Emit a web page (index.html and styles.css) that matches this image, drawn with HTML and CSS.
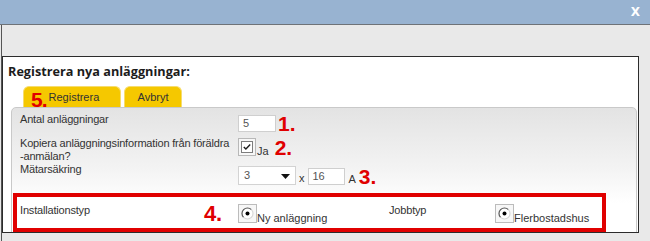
FILE: index.html
```html
<!DOCTYPE html>
<html lang="sv">
<head>
<meta charset="utf-8">
<link rel="stylesheet" href="styles.css">
</head>
<body>
<div class="titlebar"><span class="close">X</span></div>
<div class="dialog">
  <div class="panel">
    <h1 class="heading">Registrera nya anläggningar:</h1>
    <div class="tabs">
      <div class="tab tab-first"><span class="num num-tab">5.</span><span class="tab-text">Registrera</span></div>
      <div class="tab tab-second"><span class="tab-text">Avbryt</span></div>
    </div>
    <div class="formbox">
      <div class="row row-1">
        <div class="label">Antal anläggningar</div>
        <div class="ctrl ctrl-1">
          <span class="field field-small">5</span>
          <span class="num num-1">1.</span>
        </div>
      </div>
      <div class="row row-2">
        <div class="label">Kopiera anläggningsinformation från föräldra<br>-anmälan?</div>
        <div class="ctrl ctrl-2">
          <svg class="check" width="18" height="18" viewBox="0 0 18 18"><rect x="0.5" y="0.5" width="17" height="17" fill="#f7f7f7" stroke="#b8b8b8"/><rect x="3.5" y="3.5" width="11" height="11" fill="#fff" stroke="#7d7d7d"/><path d="M5.8 8.9 L7.9 11 L12.2 6.6" fill="none" stroke="#1e1e1e" stroke-width="1.4"/></svg>
          <span class="opt opt-ja">Ja</span>
          <span class="num num-2">2.</span>
        </div>
      </div>
      <div class="row row-3">
        <div class="label">Mätarsäkring</div>
        <div class="ctrl ctrl-3">
          <span class="select"><span class="select-val">3</span><svg class="caret" width="9" height="5" viewBox="0 0 9 5"><path d="M0 0 H9 L4.5 5 Z" fill="#111"/></svg></span>
          <span class="unit unit-x">x</span>
          <span class="field field-amp">16</span>
          <span class="unit unit-a">A</span>
          <span class="num num-3">3.</span>
        </div>
      </div>
      <div class="redbox">
        <div class="label label-red">Installationstyp<span class="num num-4">4.</span></div>
        <div class="radio-group">
          <svg class="radio" width="19" height="19" viewBox="0 0 19 19"><rect x="0.5" y="0.5" width="18" height="18" fill="#f7f7f7" stroke="#bcbcbc"/><circle cx="9.5" cy="9.5" r="5.5" fill="#fff"/><path d="M5.6 13.4 A5.5 5.5 0 0 1 13.4 5.6" fill="none" stroke="#555" stroke-width="1.2"/><path d="M13.4 5.6 A5.5 5.5 0 0 1 5.6 13.4" fill="none" stroke="#d8d8d8" stroke-width="1.2"/><circle cx="9.5" cy="9.5" r="2" fill="#000"/></svg>
          <span class="opt">Ny anläggning</span>
        </div>
        <div class="label label-job">Jobbtyp</div>
        <div class="radio-group">
          <svg class="radio" width="19" height="19" viewBox="0 0 19 19"><rect x="0.5" y="0.5" width="18" height="18" fill="#f7f7f7" stroke="#bcbcbc"/><circle cx="9.5" cy="9.5" r="5.5" fill="#fff"/><path d="M5.6 13.4 A5.5 5.5 0 0 1 13.4 5.6" fill="none" stroke="#555" stroke-width="1.2"/><path d="M13.4 5.6 A5.5 5.5 0 0 1 5.6 13.4" fill="none" stroke="#d8d8d8" stroke-width="1.2"/><circle cx="9.5" cy="9.5" r="2" fill="#000"/></svg>
          <span class="opt">Flerbostadshus</span>
        </div>
      </div>
    </div>
  </div>
</div>
</body>
</html>
```

FILE: styles.css
```css
* { box-sizing: border-box; }

body {
  margin: 0;
  width: 650px;
  height: 241px;
  overflow: hidden;
  background: #e9e9e9;
  font-family: "Liberation Sans", Arial, sans-serif;
  color: #333;
}

.titlebar {
  height: 25px;
  background: #98b3d1;
  border-bottom: 1px solid #6e7378;
  display: flex;
  justify-content: flex-end;
  align-items: center;
  padding-right: 10px;
}

.close {
  color: #fff;
  font: bold 12px "DejaVu Sans", sans-serif;
  line-height: 12px;
}

.dialog {
  margin-left: 1px;
  border-left: 1px solid #555;
  padding-top: 31px;
  height: 216px;
}

.panel {
  width: 637px;
  height: 177px;
  border: 1px solid #2c2c2c;
  background: #fff;
  overflow: hidden;
}

.heading {
  margin: 5px 0 0 0;
  padding-left: 5px;
  font: bold 12.7px/18px "Open Sans", sans-serif;
  color: #1c1c1c;
}

.tabs {
  display: flex;
  gap: 3px;
  margin: 6px 0 0 20px;
  height: 21px;
}

.tab {
  height: 21px;
  background: #f5c800;
  border: 1px solid #f6dc6e;
  border-bottom: none;
  border-radius: 6px 6px 0 0;
  display: flex;
  align-items: center;
  font-size: 11px;
  color: #333;
}

.tab-first {
  width: 98px;
  padding-left: 7px;
}

.tab-second {
  width: 58px;
  justify-content: center;
}

.num {
  color: #e00000;
  font-weight: bold;
  font-size: 21px;
  line-height: 17px;
}

.num-tab {
  font-size: 21px;
  letter-spacing: -1px;
  position: relative;
  top: 2px;
  margin-right: 2px;
}

.formbox {
  margin-left: 8px;
  width: 626px;
  height: 140px;
  border: 1px solid #c9c9c9;
  border-radius: 5px 5px 0 0;
  background: linear-gradient(#e3e3e3 0px, #f3f3f3 60px, #ffffff 95px);
}

.row {
  display: grid;
  grid-template-columns: 218px auto;
  padding-left: 8px;
}

.label {
  font-size: 11px;
  line-height: 13px;
  letter-spacing: -0.18px;
  color: #333;
}

.ctrl {
  display: flex;
  align-items: flex-end;
}

.row-1 { padding-top: 5px; }
.row-2 { margin-top: 5px; }
.row-3 { margin-top: 0; }

.ctrl-1 { margin-top: 2px; }
.ctrl-2 { margin-top: 1px; height: 18px; }
.ctrl-3 { margin-top: 3px; }

.field {
  display: inline-block;
  height: 17px;
  background: #fff;
  border: 1px solid #cfcfcf;
  font-size: 11px;
  line-height: 15px;
  padding-left: 4px;
  color: #555;
}

.field-small { width: 38px; }
.num-1 { margin-left: 2px; }

.check { display: block; }

.opt {
  font-size: 11px;
  line-height: 13px;
  color: #333;
  margin-bottom: -2px;
}

.opt-ja { margin-left: 1px; }
.num-2 { margin-left: 6px; }

.select {
  display: flex;
  align-items: center;
  justify-content: space-between;
  width: 58px;
  height: 19px;
  background: #fff;
  border: 1px solid #d3d3d3;
  padding: 0 5px 0 5px;
  font-size: 11px;
  color: #555;
}

.select-val { line-height: 15px; }
.caret { display: block; margin-top: 1px; }

.unit {
  font-size: 11px;
  line-height: 13px;
  color: #333;
  margin-bottom: -1px;
}

.unit-x { margin: 0 3px 0 3px; }
.field-amp { width: 37px; }
.unit-a { margin-left: 4px; }
.num-3 { margin-left: 3px; }

.redbox {
  margin: 8px 0 0 1px;
  width: 593px;
  height: 39px;
  border: 4px solid #e00000;
  background: #fff;
  padding: 7px 0 0 3px;
  display: grid;
  grid-template-columns: 218px 151px 106px auto;
  align-items: start;
}

.label-red {
  display: flex;
  justify-content: space-between;
  padding-right: 16px;
}

.num-4 {
  font-size: 22px;
  line-height: 18px;
  margin-top: 1px;
}

.radio-group {
  display: flex;
  align-items: flex-end;
}

.radio { display: block; flex: none; }
```
